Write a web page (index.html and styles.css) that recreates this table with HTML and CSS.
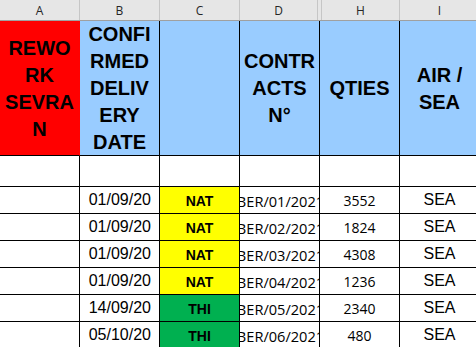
FILE: index.html
```html
<!DOCTYPE html>
<html>
<head>
<meta charset="utf-8">
<link rel="stylesheet" href="styles.css">
</head>
<body>
<div class="sheet">
  <div class="colheads">
    <div class="ch">A</div>
    <div class="ch">B</div>
    <div class="ch">C</div>
    <div class="ch ch-d">D</div>
    <div class="ch ch-gap"></div>
    <div class="ch ch-h">H</div>
    <div class="ch">I</div>
  </div>
  <div class="row row-head">
    <div class="cell hd red">REWO<br>RK<br>SEVRA<br>N</div>
    <div class="cell hd blue">CONFI<br>RMED<br>DELIV<br>ERY<br>DATE</div>
    <div class="cell hd blue"></div>
    <div class="cell hd blue">CONTR<br>ACTS<br>N°</div>
    <div class="cell hd blue">QTIES</div>
    <div class="cell hd blue">AIR /<br>SEA</div>
  </div>
  <div class="row row-empty">
    <div class="cell"></div><div class="cell"></div><div class="cell"></div><div class="cell"></div><div class="cell"></div><div class="cell"></div>
  </div>
  <div class="row">
    <div class="cell"></div><div class="cell date">01/09/20</div><div class="cell code yellow">NAT</div><div class="cell contract"><span>BER/01/2021</span></div><div class="cell qty">3552</div><div class="cell mode">SEA</div>
  </div>
  <div class="row">
    <div class="cell"></div><div class="cell date">01/09/20</div><div class="cell code yellow">NAT</div><div class="cell contract"><span>BER/02/2021</span></div><div class="cell qty">1824</div><div class="cell mode">SEA</div>
  </div>
  <div class="row">
    <div class="cell"></div><div class="cell date">01/09/20</div><div class="cell code yellow">NAT</div><div class="cell contract"><span>BER/03/2021</span></div><div class="cell qty">4308</div><div class="cell mode">SEA</div>
  </div>
  <div class="row">
    <div class="cell"></div><div class="cell date">01/09/20</div><div class="cell code yellow">NAT</div><div class="cell contract"><span>BER/04/2021</span></div><div class="cell qty">1236</div><div class="cell mode">SEA</div>
  </div>
  <div class="row">
    <div class="cell"></div><div class="cell date">14/09/20</div><div class="cell code green">THI</div><div class="cell contract"><span>BER/05/2021</span></div><div class="cell qty">2340</div><div class="cell mode">SEA</div>
  </div>
  <div class="row">
    <div class="cell"></div><div class="cell date">05/10/20</div><div class="cell code green">THI</div><div class="cell contract"><span>BER/06/2021</span></div><div class="cell qty">480</div><div class="cell mode">SEA</div>
  </div>
</div>
</body>
</html>
```

FILE: styles.css
```css
html, body {
  margin: 0;
  padding: 0;
  background: #ffffff;
  overflow: hidden;
}

.sheet {
  width: 480px;
  font-family: "Liberation Sans", Arial, sans-serif;
  color: #000;
}

.colheads {
  display: flex;
  height: 20px;
  background: #e6e6e6;
  border-bottom: 1px solid #a0a0a0;
}

.ch {
  box-sizing: border-box;
  width: 80px;
  border-right: 1px solid #c6c6c6;
  display: flex;
  align-items: center;
  justify-content: center;
  font-family: "Open Sans", "Liberation Sans", sans-serif;
  font-size: 12px;
  color: #262626;
}

.ch-d { width: 78px; }
.ch-gap { width: 4px; }
.ch-h { width: 78px; }

.row {
  display: flex;
  height: 27px;
}

.row-head { height: 135px; }
.row-empty { height: 31px; }

.cell {
  box-sizing: border-box;
  width: 80px;
  flex: none;
  border-right: 1px solid #000;
  border-bottom: 1px solid #000;
  display: flex;
  align-items: center;
  justify-content: center;
  overflow: hidden;
  white-space: nowrap;
}

.hd {
  font-weight: bold;
  font-size: 20px;
  line-height: 27px;
  text-align: center;
  white-space: normal;
  padding-top: 1px;
}

.red {
  background: #ff0000;
  border-right-color: #ff0000;
}

.blue { background: #99ccff; }
.yellow { background: #ffff00; }
.green { background: #00b050; }

.date {
  justify-content: flex-end;
  padding-right: 8px;
  font-size: 16px;
}

.code {
  font-weight: bold;
  font-size: 14px;
  padding-top: 1px;
}

.contract,
.qty {
  font-family: "Open Sans", "Liberation Sans", sans-serif;
  font-size: 14px;
  padding-top: 1px;
}

.contract {
  font-size: 14.6px;
}

.contract span {
  flex: none;
  padding-left: 2px;
}

.mode {
  font-size: 16px;
}
```
